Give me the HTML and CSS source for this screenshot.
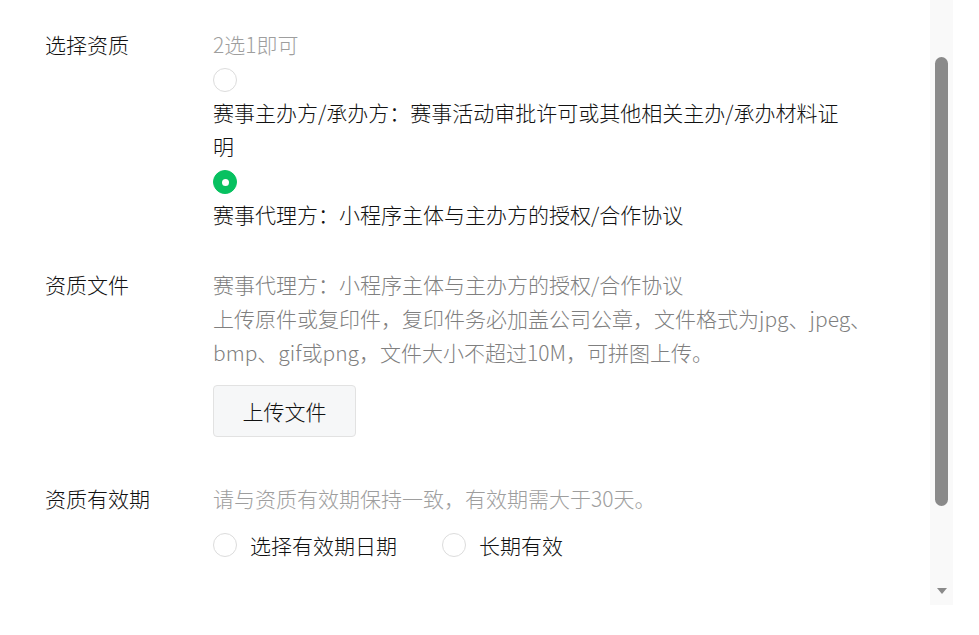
FILE: index.html
```html
<!DOCTYPE html>
<html lang="zh-CN">
<head>
<meta charset="utf-8">
<link rel="stylesheet" href="styles.css">
</head>
<body>
<div class="page">
  <main class="form">
    <section class="row row-type">
      <div class="label">选择资质</div>
      <div class="field">
        <div class="hint">2选1即可</div>
        <div class="option">
          <span class="radio"></span>
          <div class="option-text">赛事主办方/承办方：赛事活动审批许可或其他相关主办/承办材料证<br>明</div>
        </div>
        <div class="option">
          <span class="radio checked"></span>
          <div class="option-text">赛事代理方：小程序主体与主办方的授权/合作协议</div>
        </div>
      </div>
    </section>
    <section class="row row-file">
      <div class="label">资质文件</div>
      <div class="field">
        <div class="desc">赛事代理方：小程序主体与主办方的授权/合作协议<br>上传原件或复印件，复印件务必加盖公司公章，文件格式为jpg、jpeg、<br>bmp、gif或png，文件大小不超过10M，可拼图上传。</div>
        <button class="upload">上传文件</button>
      </div>
    </section>
    <section class="row row-date">
      <div class="label">资质有效期</div>
      <div class="field">
        <div class="hint">请与资质有效期保持一致，有效期需大于30天。</div>
        <div class="inline-radios">
          <label class="inline-radio"><span class="radio"></span><span>选择有效期日期</span></label>
          <label class="inline-radio"><span class="radio"></span><span>长期有效</span></label>
        </div>
      </div>
    </section>
  </main>
  <div class="scrollbar">
    <div class="thumb"></div>
    <div class="arrow"></div>
  </div>
</div>
</body>
</html>
```
FILE: styles.css
```css
* { box-sizing: border-box; }
html, body { margin: 0; padding: 0; background: #fff; }
body {
  font-family: "Noto Sans CJK SC", "Noto Sans", sans-serif;
  font-size: 21px;
  font-weight: 300;
  line-height: 34px;
  color: #111;
}
.page {
  display: flex;
  width: 979px;
  height: 635px;
}
.form {
  flex: 0 0 930px;
  padding: 27px 0 0 45px;
}
.row {
  display: flex;
}
.label {
  flex: 0 0 168px;
  color: #111;
}
.field {
  width: 700px;
  display: flex;
  flex-direction: column;
  align-items: flex-start;
  white-space: nowrap;
}
.hint { color: #9e9e9e; }
.desc { color: #7f7f7f; }
.option {
  display: flex;
  flex-direction: column;
  align-items: flex-start;
}
.option .radio { margin-top: 7px; margin-bottom: 3px; }
.radio {
  width: 24px;
  height: 24px;
  border: 1px solid #dcdcdc;
  border-radius: 50%;
  background: #fff;
  display: inline-flex;
  align-items: center;
  justify-content: center;
  flex: 0 0 24px;
}
.radio.checked {
  background: #07c160;
  border-color: #07c160;
}
.radio.checked::after {
  content: "";
  width: 7px;
  height: 7px;
  border-radius: 50%;
  background: #fff;
}
.row-file { margin-top: 36px; }
.upload {
  margin-top: 16px;
  width: 143px;
  height: 52px;
  border: 1px solid #e2e2e2;
  border-radius: 4px;
  background: #f6f7f8;
  font: inherit;
  color: #111;
  padding: 0;
}
.row-date { margin-top: 44px; }
.inline-radios {
  display: flex;
  gap: 45px;
  margin-top: 18px;
}
.inline-radio {
  display: flex;
  align-items: center;
  gap: 13px;
  height: 24px;
}
.scrollbar {
  flex: 0 0 23px;
  height: 605px;
  background: #f9f9f9;
  display: flex;
  flex-direction: column;
  align-items: center;
  padding-top: 57px;
}
.thumb {
  width: 13px;
  height: 449px;
  border-radius: 7px;
  background: #8a8a8a;
}
.arrow {
  margin-top: 82px;
  width: 0;
  height: 0;
  border-left: 5px solid transparent;
  border-right: 5px solid transparent;
  border-top: 6px solid #8a8a8a;
}
```
